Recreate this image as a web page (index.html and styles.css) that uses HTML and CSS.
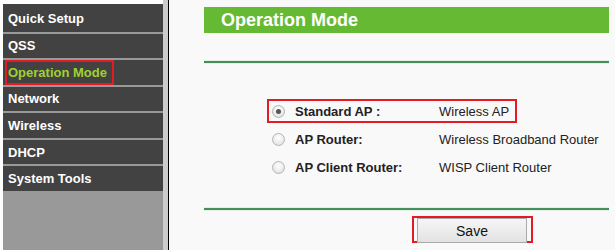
FILE: index.html
```html
<!DOCTYPE html>
<html>
    <head>
        <title>Operation Mode</title>
        <link rel="stylesheet" href="styles.css">
    </head>
    <body>
        <div class="page">
            <div class="sidebar">
                <div class="menu">
                    <div class="menuItem first">Quick Setup</div>
                    <div class="menuItem">QSS</div>
                    <div class="menuItem active"><span class="marked">Operation Mode</span></div>
                    <div class="menuItem">Network</div>
                    <div class="menuItem">Wireless</div>
                    <div class="menuItem">DHCP</div>
                    <div class="menuItem">System Tools</div>
                </div>
                <div class="strip"></div>
                <div class="rule"></div>
            </div>
            <div class="content">
                <div class="panel">
                    <div class="header">Operation Mode</div>
                    <div class="line top"></div>
                    <div class="modes">
                        <div class="mode marked">
                            <span class="radio checked"></span>
                            <span class="modeName">Standard AP :</span>
                            <span class="modeDesc">Wireless AP</span>
                        </div>
                        <div class="mode">
                            <span class="radio"></span>
                            <span class="modeName">AP Router:</span>
                            <span class="modeDesc">Wireless Broadband Router</span>
                        </div>
                        <div class="mode">
                            <span class="radio"></span>
                            <span class="modeName">AP Client Router:</span>
                            <span class="modeDesc">WISP Client Router</span>
                        </div>
                    </div>
                    <div class="line bottom"></div>
                    <div class="actions">
                        <div class="saveBox marked">
                            <button class="save">Save</button>
                        </div>
                    </div>
                </div>
            </div>
        </div>
    </body>
</html>
```

FILE: styles.css
```css
*{
    margin: 0;
    padding: 0;
    box-sizing: border-box;
}
body{
    font-family: "Liberation Sans", Arial, sans-serif;
    background: #ffffff;
    width: 615px;
    height: 250px;
    overflow: hidden;
}
.page{
    display: flex;
    height: 250px;
}
.sidebar{
    display: flex;
    width: 169px;
    flex-shrink: 0;
}
.menu{
    margin: 4px 0 0 3px;
    width: 160px;
    background: #999999;
    display: flex;
    flex-direction: column;
    gap: 2px;
}
.menuItem{
    height: 24.6px;
    background: #424242;
    color: #ffffff;
    font-size: 13px;
    font-weight: bold;
    padding-left: 5px;
    display: flex;
    align-items: center;
}
.menuItem.first{
    height: 27.5px;
    padding-top: 2px;
}
.menuItem.active{
    color: #9fd12e;
}
.menuItem .marked{
    margin-left: -3px;
    height: 25px;
    padding: 0 5px 0 1px;
    display: flex;
    align-items: center;
}
.marked{
    border: 2px solid #e41b23;
}
.strip{
    width: 5px;
    background: #cccccc;
}
.rule{
    width: 1px;
    background: #000000;
}
.content{
    flex: 1;
    background: #f9f9f9;
    padding: 7px 6px 0 35px;
}
.header{
    height: 26px;
    background: #66b933;
    color: #ffffff;
    font-size: 18px;
    font-weight: bold;
    padding-left: 17px;
    display: flex;
    align-items: center;
}
.line{
    height: 2px;
    background: #428f5c;
    box-shadow: 0 -1px 0 #e6eee8, 0 1px 0 #e6eee8;
}
.line.top{
    margin-top: 28px;
}
.modes{
    margin: 36px 0 0 63px;
    display: flex;
    flex-direction: column;
    align-items: flex-start;
    gap: 4px;
}
.mode{
    height: 24px;
    border: 2px solid transparent;
    padding: 0 6px 0 3px;
    display: flex;
    align-items: center;
    font-size: 13px;
    color: #222222;
}
.mode.marked{
    border-color: #e41b23;
}
.radio{
    width: 13px;
    height: 13px;
    border-radius: 50%;
    border: 1px solid #b4b4b4;
    background: radial-gradient(circle at 50% 35%, #ffffff, #dcdcdc);
    margin-right: 10px;
    display: flex;
    align-items: center;
    justify-content: center;
}
.radio.checked::after{
    content: "";
    width: 5px;
    height: 5px;
    border-radius: 50%;
    background: #555555;
}
.modeName{
    width: 144px;
    font-weight: bold;
}
.line.bottom{
    margin-top: 29px;
}
.actions{
    margin-top: 6px;
    padding-left: 208px;
}
.saveBox{
    width: 121px;
    height: 27px;
    padding: 0 4px 0 3px;
}
.save{
    width: 110px;
    height: 25px;
    font-family: "Liberation Sans", Arial, sans-serif;
    font-size: 14px;
    color: #111111;
    border: 1px solid #a9a9a9;
    border-radius: 0;
    background: linear-gradient(#f6f6f6, #e2e2e2);
}
```
